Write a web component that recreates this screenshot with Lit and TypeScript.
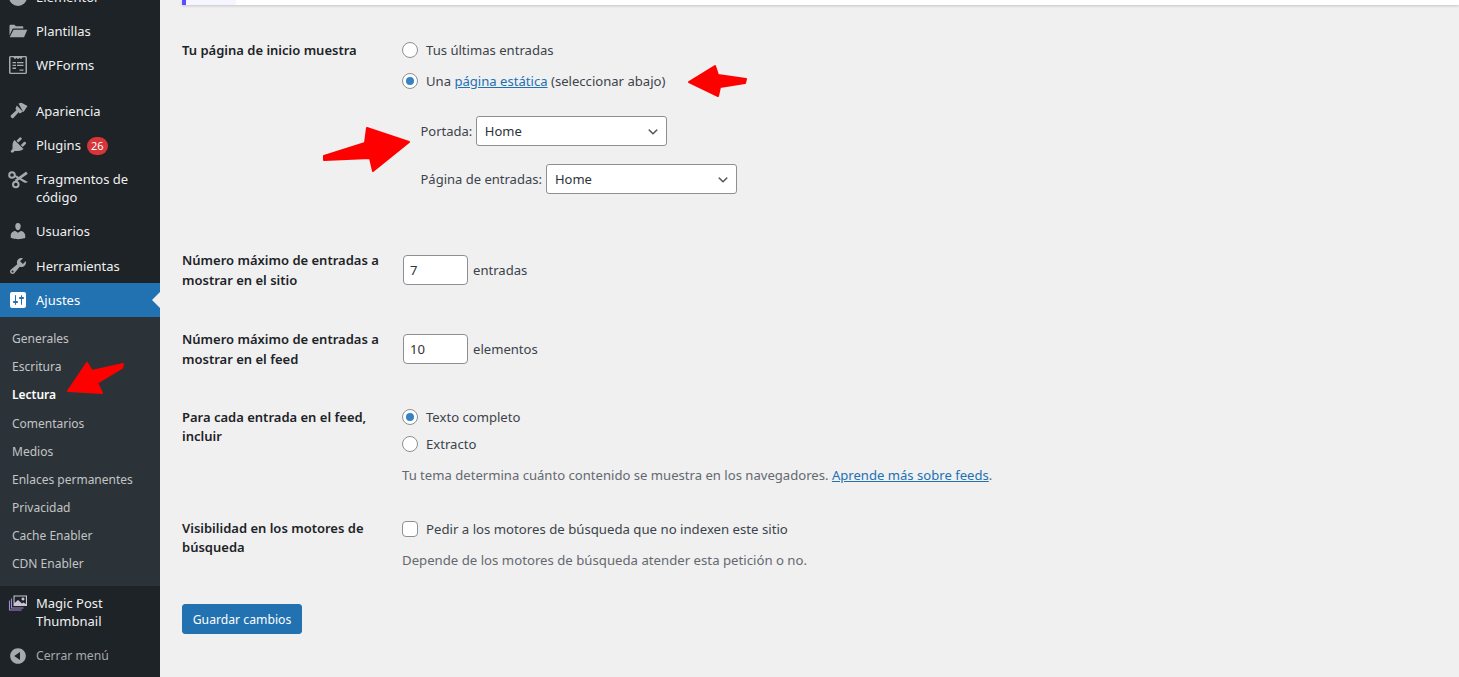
import { LitElement, html, css, svg } from "lit";
import { customElement } from "lit/decorators.js";

const ICONS: Record<string, unknown> = {
  elementor: svg`<circle cx="10" cy="10" r="9"/>`,
  folder: svg`<path d="M1.500 5c0-.8.5-1.300 1.300-1.300h3.600l1.500 1.600h6.300c.7 0 1.100.4 1.100 1.100v1.200H5.600c-.7 0-1.100.3-1.400.9L1.500 14.500z"/><path d="M5.500 8.800H19.300l-3.300 7.500H1.700z"/>`,
  wpforms: svg`<path fill-rule="evenodd" d="M2.500 1h15C18.300 1 19 1.700 19 2.500v15c0 .8-.7 1.500-1.500 1.500h-15C1.700 19 1 18.300 1 17.500v-15C1 1.700 1.700 1 2.500 1zM2.500 2.300v15.400h15V2.300h-2.800l-1.700 2-1.500-1.500-1.500 1.500-1.500-1.500-1.500 1.500-1.700-2zM4.500 7h3.500v1.300H4.500zM9 7h6.500v1.300H9zM4.500 9.800h3.500v1.300H4.500zM9 9.800h6.500v1.300H9zM4.500 12.600h3.500v1.300H4.500zM11.500 14.500h4v1.300h-4z"/>`,
  appearance: svg`<path d="M10.500 2.500l3-.8 6 3.300-3.800 5.800-.7-.1zM8.800 4.500l6 6.300-3 1.700-1.200-1.200-5.200 5.800c-1 1-3.600-1.400-2.600-2.500l5.800-5.500-1.200-1.200z"/>`,
  plugins: svg`<path transform="translate(.5 0)" d="M13.110 4.360L9.870 7.600 8 5.730l3.240-3.240c.35-.34 1.050-.2 1.560.32.52.51.66 1.210.31 1.550zm-8 1.770l.91-1.120 9.010 9.010-1.190.84c-.71.71-2.630 1.160-3.820 1.160H6.140L4.900 17.260c-.59.59-1.540.59-2.120 0-.59-.58-.59-1.530 0-2.120l1.240-1.240v-3.880c0-1.130.4-3.190 1.090-3.890zm7.260 3.970l3.240-3.240c.34-.35 1.040-.21 1.550.31.52.51.66 1.210.31 1.550l-3.240 3.250z"/>`,
  scissors: svg`<g fill="none" stroke-width="2"><circle cx="4" cy="6" r="2.800"/><circle cx="7.800" cy="15.500" r="2.800"/></g><path d="M5.800 7.200l1.100-1.500 13 7.300c-1 1-2.500 1-3.800.4zM8.300 12.700l-1.700-1.600L17.800 2.800c1 .4 1.700 1.200 1.800 2.200z"/>`,
  users: svg`<path d="M10 9.250c-2.270 0-2.730-3.440-2.730-3.440C7 4.020 7.820 2 9.970 2c2.160 0 2.980 2.020 2.710 3.810 0 0-.41 3.440-2.680 3.440zm0 2.570L12.720 10c2.390 0 4.520 2.330 4.520 4.530v2.490s-3.650 1.130-7.240 1.130c-3.650 0-7.240-1.130-7.240-1.130v-2.490c0-2.250 1.940-4.480 4.470-4.480z"/>`,
  tools: svg`<path d="M16.680 9.770c-1.340 1.340-3.300 1.670-4.950.99l-5.410 6.520c-.99.99-2.590.99-3.580 0s-.99-2.590 0-3.570l6.520-5.420c-.68-1.650-.35-3.610.99-4.950 1.280-1.280 3.120-1.620 4.720-1.060l-2.890 2.890 2.820 2.820 2.860-2.870c.53 1.580.18 3.390-1.080 4.650zM3.810 16.210c.4.39 1.040.39 1.430 0 .4-.4.4-1.040 0-1.430-.39-.4-1.030-.4-1.430 0-.39.39-.39 1.030 0 1.430z"/>`,
  settings: svg`<path d="M18 16V4c0-1.100-.9-2-2-2H4c-1.100 0-2 .9-2 2v12c0 1.100.9 2 2 2h12c1.100 0 2-.9 2-2zM8 11h1c.55 0 1 .45 1 1s-.45 1-1 1H8v1.500c0 .28-.22.5-.5.5s-.5-.22-.5-.5V13H6c-.55 0-1-.45-1-1s.45-1 1-1h1V5.500c0-.28.22-.5.5-.5s.5.22.5.5V11zm5-2h-1c-.55 0-1-.45-1-1s.45-1 1-1h1V5.500c0-.28.22-.5.5-.5s.5.22.5.5V7h1c.55 0 1 .45 1 1s-.45 1-1 1h-1v5.500c0 .28-.22.5-.5.5s-.5-.22-.5-.5V9z"/>`,
  magic: svg`<g fill="none" stroke-width="1.100" stroke="#a58ad6"><path d="M1.500 7.500v9.500h12"/><path d="M3.500 5.500v9.500h12"/></g><path fill-rule="evenodd" d="M5.500 2.500h13.500v10.500H5.500zM6.600 3.600v6.400l3.400-3 4 3.500 1.500-1 2.400 1.500V3.600zM15 4.500a1.500 1.500 0 1 0 .01 0z"/>`,
  collapse: svg`<path d="M10 2.160c4.330 0 7.840 3.510 7.840 7.840s-3.510 7.840-7.840 7.840S2.160 14.330 2.160 10 5.710 2.160 10 2.160zm2 11.720V6.120L6.180 9.970z"/>`,
};

const icon = (name: string) =>
  html`<svg class="icon" viewBox="0 0 20 20" aria-hidden="true">${ICONS[name]}</svg>`;

interface MenuItem {
  label: unknown;
  icon: string;
  cls?: string;
}

const chevron =
  "url(\"data:image/svg+xml,%3Csvg xmlns='http://www.w3.org/2000/svg' width='20' height='20'%3E%3Cpath d='M5 6l5 5 5-5 2 1-7 7-7-7z' fill='%23555'/%3E%3C/svg%3E\")";

@customElement("app-root")
export class AppRoot extends LitElement {
  static styles = css`
    :host {
      display: block;
      position: relative;
      width: 100%;
      height: 677px;
      overflow: hidden;
      background: #f0f0f1;
      color: #3c434a;
      font-family: "Noto Sans", "Open Sans", sans-serif;
      font-size: 13px;
      line-height: 18px;
    }
    .layout { display: flex; height: 677px; }

    /* Sidebar */
    .side {
      flex: 0 0 160px;
      width: 160px;
      background: #1d2327;
      color: #f0f0f1;
      overflow: hidden;
    }
    .menu { margin-top: -20px; display: flex; flex-direction: column; }
    .item {
      display: flex;
      align-items: flex-start;
      gap: 8px;
      padding: 8px;
      position: relative;
    }
    .item .icon {
      flex: 0 0 20px;
      width: 20px;
      height: 20px;
      margin: -1px 0;
      fill: #a7aaad;
      stroke: #a7aaad;
      stroke-width: 0;
    }
    .item.on { background: #2271b1; color: #fff; }
    .item.on .icon { fill: #fff; }
    .item.on::after {
      content: "";
      position: absolute;
      right: 0;
      top: 9px;
      border: 8px solid transparent;
      border-right-color: #f0f0f1;
      border-left-width: 0;
    }
    .item.magic .icon { fill: #c9c5d3; stroke: #c9c5d3; }
    .item.gap { margin-bottom: 12px; }
    .item.tall { padding-bottom: 9px; }
    .item.close { color: #a7aaad; font-size: 12.200px; padding-top: 9px; }
    .plug { display: flex; align-items: center; gap: 6px; height: 18px; }
    .badge {
      background: #d63638;
      color: #fff;
      font-size: 11px;
      line-height: 18px;
      width: 21px;
      text-align: center;
      border-radius: 9px;
      margin-top: 2px;
    }
    .sub {
      background: #2c3338;
      padding: 8.300px 0 7.700px;
      display: flex;
      flex-direction: column;
    }
    .sub div {
      padding: 5px 12px;
      line-height: 18.100px;
      color: #c3c4c7;
      font-size: 12px;
    }
    .sub .cur { color: #fff; font-weight: 600; }

    /* Main */
    .main { flex: 1; min-width: 0; padding: 0 0 0 22px; font-size: 13.100px; }
    .notice {
      height: 5px;
      border-left: 4px solid #5a4fff;
      background: linear-gradient(to right, #f5f6ff 50px, #fff 50px);
      box-shadow: 0 1px 3px rgba(0, 0, 0, 0.18);
    }
    .row {
      display: grid;
      grid-template-columns: 220px 1fr;
    }
    .th {
      font-weight: 600;
      color: #1d2327;
      font-size: 13px;
      line-height: 19.500px;
    }
    .r1 { margin-top: 36px; height: 186px; }
    .r2 { margin-top: 24px; height: 55px; }
    .r3 { margin-top: 24px; height: 54px; }
    .r4 { margin-top: 24px; height: 87px; }
    .r5 { margin-top: 24px; font-size: 13.200px; }
    .r4 .th, .r5 .th { line-height: 19px; }
    .r5 .choice { margin-top: 1px; }
    .choice {
      display: flex;
      align-items: center;
      gap: 8px;
      height: 18px;
    }
    .choice + .choice { margin-top: 13px; }
    .r4 .choice + .choice { margin-top: 9px; }
    .desc { color: #646970; margin-top: 13px; }
    a { color: #2271b1; text-decoration: underline; }
    input[type="radio"], input[type="checkbox"] {
      appearance: none;
      margin: 0;
      flex: 0 0 16px;
      width: 16px;
      height: 16px;
      border: 1px solid #8c8f94;
      background: #fff;
      border-radius: 50%;
      display: grid;
      place-items: center;
    }
    input[type="checkbox"] { border-radius: 4px; }
    input[type="radio"]:checked::before {
      content: "";
      width: 8px;
      height: 8px;
      border-radius: 50%;
      background: #3582c4;
    }
    .pick {
      display: flex;
      align-items: center;
      gap: 3.500px;
      margin-left: 18.500px;
      font-size: 13px;
    }
    .pick + .pick { gap: 4px; }
    .picks { display: flex; flex-direction: column; gap: 18px; margin-top: 26px; }
    select {
      appearance: none;
      width: 191px;
      height: 30px;
      font: inherit;
      color: #2c3338;
      border: 1px solid #8c8f94;
      border-radius: 3px;
      padding: 0 24px 0 8px;
      background: #fff ${css([chevron] as unknown as TemplateStringsArray)} no-repeat right 6px top 8px / 14px 14px;
    }
    .num { display: flex; align-items: center; gap: 5px; margin-top: 4px; height: 30px; }
    input[type="number"] {
      appearance: textfield;
      width: 65px;
      height: 30px;
      box-sizing: border-box;
      font: inherit;
      color: #2c3338;
      border: 1px solid #8c8f94;
      border-radius: 4px;
      padding: 0 6px;
      margin-left: 1px;
      background: #fff;
    }
    button {
      display: block;
      margin-top: 35px;
      width: 120px;
      height: 30px;
      padding: 2px 0 0;
      font: inherit;
      font-size: 12.200px;
      color: #fff;
      background: #2271b1;
      border: 1px solid #2271b1;
      border-radius: 3px;
    }
    .arrows {
      position: absolute;
      left: 0;
      top: 0;
      width: 1459px;
      height: 677px;
      pointer-events: none;
    }
    .arrows polygon { fill: #ff0000; stroke: #ff0000; stroke-width: 2; stroke-linejoin: round; }
  `;

  private renderItem(m: MenuItem) {
    return html`<div class="item ${m.cls ?? ""}">${icon(m.icon)}<span>${m.label}</span></div>`;
  }

  render() {
    const top: MenuItem[] = [
      { label: "Elementor", icon: "elementor" },
      { label: "Plantillas", icon: "folder" },
      { label: "WPForms", icon: "wpforms", cls: "gap" },
      { label: "Apariencia", icon: "appearance" },
      { label: html`<span class="plug">Plugins <span class="badge">26</span></span>`, icon: "plugins" },
      { label: "Fragmentos de código", icon: "scissors" },
      { label: "Usuarios", icon: "users", cls: "tall" },
      { label: "Herramientas", icon: "tools" },
      { label: "Ajustes", icon: "settings", cls: "on" },
    ];
    const sub = [
      "Generales", "Escritura", "Lectura", "Comentarios", "Medios",
      "Enlaces permanentes", "Privacidad", "Cache Enabler", "CDN Enabler",
    ];
    return html`
      <div class="layout">
        <nav class="side">
          <div class="menu">
            ${top.map((m) => this.renderItem(m))}
            <div class="sub">
              ${sub.map((s) => html`<div class=${s === "Lectura" ? "cur" : ""}>${s}</div>`)}
            </div>
            ${this.renderItem({ label: "Magic Post Thumbnail", icon: "magic", cls: "magic" })}
            ${this.renderItem({ label: "Cerrar menú", icon: "collapse", cls: "close" })}
          </div>
        </nav>
        <main class="main">
          <div class="notice"></div>
          <div class="row r1">
            <div class="th">Tu página de inicio muestra</div>
            <div>
              <label class="choice"><input type="radio" name="a" />Tus últimas entradas</label>
              <label class="choice"><input type="radio" name="a" checked />
                <span>Una <a href="#">página estática</a> (seleccionar abajo)</span></label>
              <div class="picks">
                <div class="pick">Portada: <select><option>Home</option></select></div>
                <div class="pick">Página de entradas: <select><option>Home</option></select></div>
              </div>
            </div>
          </div>
          <div class="row r2">
            <div class="th">Número máximo de entradas a mostrar en el sitio</div>
            <div class="num"><input type="number" value="7" /> entradas</div>
          </div>
          <div class="row r3">
            <div class="th">Número máximo de entradas a mostrar en el feed</div>
            <div class="num"><input type="number" value="10" /> elementos</div>
          </div>
          <div class="row r4">
            <div class="th">Para cada entrada en el feed, incluir</div>
            <div>
              <label class="choice"><input type="radio" name="b" checked />Texto completo</label>
              <label class="choice"><input type="radio" name="b" />Extracto</label>
              <div class="desc">Tu tema determina cuánto contenido se muestra en los navegadores. <a href="#">Aprende más sobre feeds</a>.</div>
            </div>
          </div>
          <div class="row r5">
            <div class="th">Visibilidad en los motores de búsqueda</div>
            <div>
              <label class="choice"><input type="checkbox" />Pedir a los motores de búsqueda que no indexen este sitio</label>
              <div class="desc">Depende de los motores de búsqueda atender esta petición o no.</div>
            </div>
          </div>
          <button>Guardar cambios</button>
        </main>
      </div>
      <svg class="arrows" viewBox="0 0 1459 677" aria-hidden="true">
        <polygon points="689,82 715,66 718,75 746,79 745,83 720,87 718,96"/>
        <polygon points="324,156 365,143 367,128 409,142 373,171 370,158 324,160"/>
        <polygon points="68,391 87,363 92,371 123,364 122,368 97,383 102,393"/>
      </svg>
    `;
  }
}
